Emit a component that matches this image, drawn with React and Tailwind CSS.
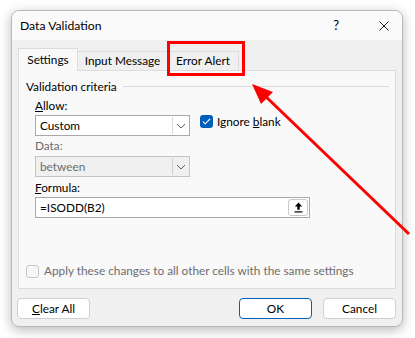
import React from "react";

const Chevron = () => (
  <svg width="10" height="6" viewBox="0 0 10 6" fill="none">
    <path d="M1 1l4 4 4-4" stroke="#606060" strokeWidth="1" />
  </svg>
);

function Select({ value, disabled }) {
  return (
    <div
      className={`flex h-[21px] w-[155px] items-stretch border ${
        disabled ? "border-[#c4c4c4] bg-[#f0f0f0] text-[#6d6d6d]" : "border-[#a9a9a9] bg-white text-black"
      }`}
    >
      <div className="flex flex-1 items-center pl-[4px]">{value}</div>
      <div
        className={`m-[1px] flex w-[16px] items-center justify-center border-l ${
          disabled ? "border-[#d0d0d0] bg-[#f0f0f0]" : "border-[#d8d8d8] bg-white"
        }`}
      >
        <Chevron />
      </div>
    </div>
  );
}

export default function App() {
  return (
    <div
      className="relative h-[338px] w-[415px] overflow-hidden bg-white text-[11.8px] text-black"
      style={{ fontFamily: 'Lato, "Noto Sans", sans-serif' }}
    >
      <div className="ml-[11px] mt-[10px] flex h-[317px] w-[392px] flex-col overflow-hidden rounded-[8px] border border-[#b9b9b9] bg-[#f0f0f0] shadow-[0_3px_12px_rgba(0,0,0,0.28)]">
        {/* Title bar */}
        <div className="flex h-[29px] items-center bg-[#fafafa] pl-[8px] pr-[13px]">
          <span className="flex-1 pt-[1px] text-[12.2px] leading-none">Data Validation</span>
          <span className="mr-[40px] text-[13px] leading-none">?</span>
          <svg width="10" height="10" viewBox="0 0 10 10" fill="none">
            <path d="M0.5 0.5l9 9M9.5 0.5l-9 9" stroke="#1a1a1a" strokeWidth="1" />
          </svg>
        </div>

        {/* Body */}
        <div className="flex flex-1 flex-col px-[6px] pt-[7px]">
          {/* Tabs */}
          <div className="flex h-[23px] items-end">
            <div className="relative z-10 -mb-px flex h-[23px] w-[60px] items-center justify-center border border-b-0 border-[#dcdcdc] bg-[#f9f9f9]">
              Settings
            </div>
            <div className="flex h-[19px] w-[90px] items-center justify-center border-r border-t border-[#dcdcdc] bg-[#f0f0f0]">
              Input Message
            </div>
            <div className="flex h-[19px] w-[71px] items-center justify-center border-r border-t border-[#dcdcdc] bg-[#f0f0f0]">
              Error Alert
            </div>
          </div>

          {/* Panel */}
          <div className="flex h-[219px] flex-col border border-[#dcdcdc] bg-[#f9f9f9] pl-[7px] pr-[6px] pt-[7px]">
            <div className="flex h-[17px] items-center">
              <span className="leading-none">Validation criteria</span>
              <div className="ml-[6px] h-px flex-1 bg-[#dadada]" />
            </div>

            <div className="ml-[9px] mt-[3px] flex flex-col">
              <div className="h-[16px] leading-[16px]">
                <u>A</u>llow:
              </div>
              <div className="mt-[1px] flex items-center">
                <Select value="Custom" />
                <div className="ml-[10px] flex h-[21px] items-start gap-[4px] pt-[0px]">
                  <div className="flex h-[13px] w-[13px] items-center justify-center rounded-[3px] bg-[#005fb8]">
                    <svg width="9" height="7" viewBox="0 0 9 7" fill="none">
                      <path d="M1 3.6l2.2 2.2L8 1" stroke="white" strokeWidth="1.1" />
                    </svg>
                  </div>
                  <span className="-mt-[1px] leading-[16px]">
                    Ignore <u>b</u>lank
                  </span>
                </div>
              </div>

              <div className="mt-[2px] h-[16px] leading-[16px] text-[#6d6d6d]">Data:</div>
              <div className="mt-[2px]">
                <Select value="between" disabled />
              </div>

              <div className="mt-[3px] h-[16px] leading-[16px]">
                <u>F</u>ormula:
              </div>
              <div className="mt-[1px] flex h-[21px] w-[275px] items-center border border-[#a9a9a9] bg-white pl-[4px] pr-[1px]">
                <span className="flex-1">=ISODD(B2)</span>
                <div className="flex h-[17px] w-[20px] items-center justify-center rounded-[3px] border border-[#c8c8c8] bg-white">
                  <svg width="9" height="11" viewBox="0 0 9 11" fill="none">
                    <path d="M4.5 0.5L0.8 4.5h2.5v3.2h2.4V4.5h2.5z" fill="black" />
                    <rect x="0.5" y="9.3" width="8" height="1.2" fill="black" />
                  </svg>
                </div>
              </div>
            </div>

            <div className="mt-[45px] flex items-center gap-[5px] text-[#6d6d6d]">
              <div className="h-[13px] w-[13px] rounded-[3px] border border-[#c8c8c8] bg-[#f7f7f7]" />
              <span className="leading-[16px]">Apply these changes to all other cells with the same settings</span>
            </div>
          </div>

          {/* Buttons */}
          <div className="mt-[9px] flex items-center">
            <div className="-ml-px flex h-[21px] w-[73px] items-center justify-center rounded-[4px] border border-[#d0d0d0] bg-white">
              <span>
                <u>C</u>lear All
              </span>
            </div>
            <div className="flex-1" />
            <div className="flex h-[21px] w-[73px] items-center justify-center rounded-[4px] border border-[#005fb8] bg-white">
              OK
            </div>
            <div className="ml-[11px] flex h-[21px] w-[73px] items-center justify-center rounded-[4px] border border-[#d0d0d0] bg-white">
              Cancel
            </div>
          </div>
        </div>
      </div>

      {/* Red highlight box */}
      <div className="pointer-events-none absolute left-[167px] top-[41px] h-[35px] w-[78px] border-[3px] border-[#ff0000]" />

      {/* Red arrow */}
      <svg className="pointer-events-none absolute left-0 top-0" width="415" height="338" viewBox="0 0 415 338">
        <line x1="409" y1="234" x2="262" y2="93" stroke="#ff0000" strokeWidth="3" />
        <polygon points="252,84 273,92 261,104" fill="#ff0000" />
      </svg>
    </div>
  );
}
